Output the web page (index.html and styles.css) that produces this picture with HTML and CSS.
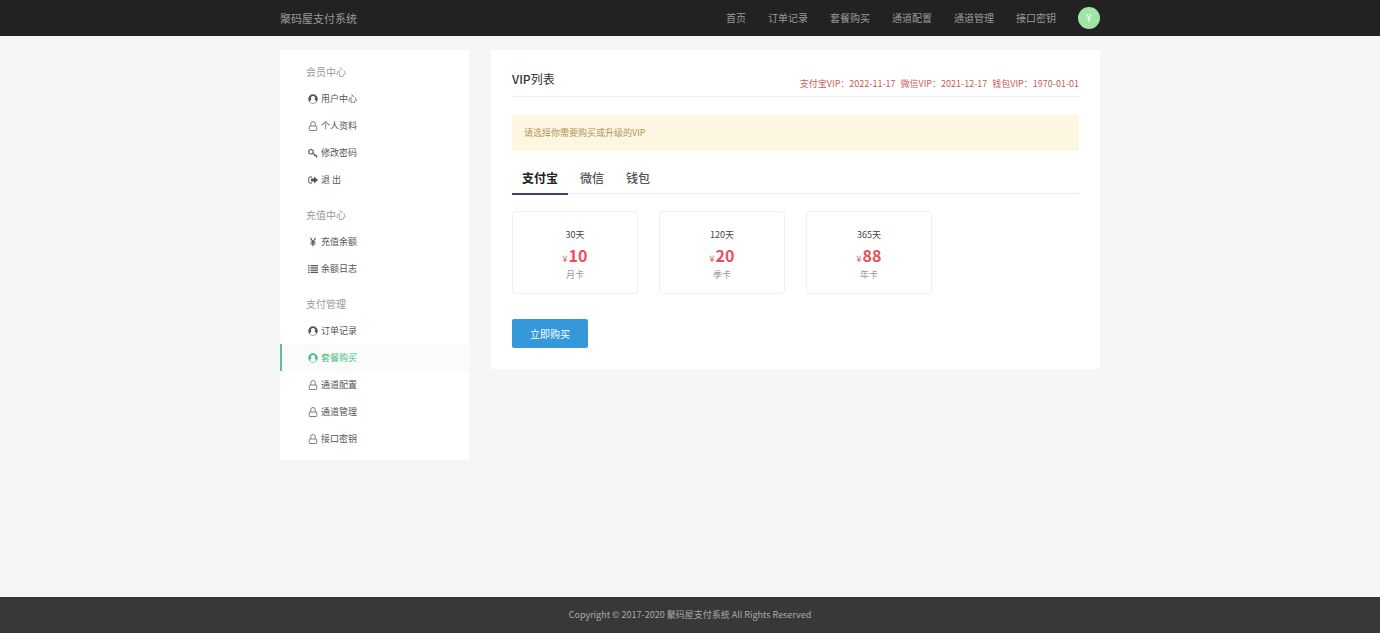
FILE: index.html
```html
<!DOCTYPE html>
<html lang="zh-CN">
<head>
<meta charset="utf-8">
<meta name="viewport" content="width=device-width, initial-scale=1">
<title>聚码屋支付系统</title>
<link rel="stylesheet" href="styles.css">
</head>
<body>
<svg class="sprite" aria-hidden="true">
  <symbol id="i-user" viewBox="0 0 20 20"><path fill-rule="evenodd" d="M10 0.500a9.500 9.500 0 1 1 0 19a9.500 9.500 0 0 1 0-19zM10 4a4.200 4.200 0 0 0-2.600 7.500c-2 .4-3.400 1.700-4 3.500a8 8 0 0 0 13.200 0c-.6-1.800-2-3.100-4-3.500A4.200 4.200 0 0 0 10 4z"/></symbol>
  <symbol id="i-lock" viewBox="0 0 20 20"><path fill="none" stroke="currentColor" stroke-width="1.500" stroke-linejoin="round" d="M4 10h12a1.500 1.500 0 0 1 1.500 1.500v6A1.500 1.500 0 0 1 16 19H4a1.500 1.500 0 0 1-1.500-1.500v-6A1.500 1.500 0 0 1 4 10zM5.500 10V5.500a4.500 4.500 0 0 1 9 0V10"/></symbol>
  <symbol id="i-key" viewBox="0 0 20 20"><path fill="none" stroke="currentColor" stroke-width="2.200" d="M6 3a4.500 4.500 0 1 1 0 9a4.500 4.500 0 0 1 0-9zM9.500 10.500l9 6.500M12.500 16.500l2.500-3M16 19l2.500-3"/></symbol>
  <symbol id="i-exit" viewBox="0 0 20 20"><path fill="none" stroke="currentColor" stroke-width="2" d="M8 4H3.500a2 2 0 0 0-2 2v8a2 2 0 0 0 2 2H8"/><path d="M12 3l8 7l-8 7v-4H6V7h6z"/></symbol>
  <symbol id="i-yen" viewBox="0 0 20 20"><path fill="none" stroke="currentColor" stroke-width="2.400" d="M5 2l5 8l5-8M10 9v9.500M5 10.500h10M5 14h10"/></symbol>
  <symbol id="i-list" viewBox="0 0 20 20"><path d="M0 2h3v2.500H0zM5 2h15v2.500H5zM0 6.500h3V9H0zM5 6.500h15V9H5zM0 11h3v2.500H0zM5 11h15v2.500H5zM0 15.500h3V18H0zM5 15.500h15V18H5z"/></symbol>
</svg>

<header class="topbar">
  <div class="container topbar-inner">
    <a class="brand" href="#">聚码屋支付系统</a>
    <nav class="topnav">
      <a href="#">首页</a>
      <a href="#">订单记录</a>
      <a href="#">套餐购买</a>
      <a href="#">通道配置</a>
      <a href="#">通道管理</a>
      <a href="#">接口密钥</a>
      <a class="avatar" href="#">Y</a>
    </nav>
  </div>
</header>

<div class="container layout">
  <aside class="sidebar">
    <section class="group">
      <h2 class="group-title">会员中心</h2>
      <a class="item" href="#"><svg class="icon"><use href="#i-user"/></svg>用户中心</a>
      <a class="item" href="#"><svg class="icon"><use href="#i-lock"/></svg>个人资料</a>
      <a class="item" href="#"><svg class="icon"><use href="#i-key"/></svg>修改密码</a>
      <a class="item" href="#"><svg class="icon"><use href="#i-exit"/></svg>退 出</a>
    </section>
    <section class="group">
      <h2 class="group-title">充值中心</h2>
      <a class="item" href="#"><svg class="icon"><use href="#i-yen"/></svg>充值余额</a>
      <a class="item" href="#"><svg class="icon"><use href="#i-list"/></svg>余额日志</a>
    </section>
    <section class="group">
      <h2 class="group-title">支付管理</h2>
      <a class="item" href="#"><svg class="icon"><use href="#i-user"/></svg>订单记录</a>
      <a class="item active" href="#"><svg class="icon"><use href="#i-user"/></svg>套餐购买</a>
      <a class="item" href="#"><svg class="icon"><use href="#i-lock"/></svg>通道配置</a>
      <a class="item" href="#"><svg class="icon"><use href="#i-lock"/></svg>通道管理</a>
      <a class="item" href="#"><svg class="icon"><use href="#i-lock"/></svg>接口密钥</a>
    </section>
  </aside>

  <main class="panel">
    <div class="panel-head">
      <h1 class="panel-title"><span class="latin">VIP</span>列表</h1>
      <div class="expiry">
        <span>支付宝VIP：2022-11-17</span>
        <span>微信VIP：2021-12-17</span>
        <span>钱包VIP：1970-01-01</span>
      </div>
    </div>
    <div class="notice">请选择你需要购买或升级的VIP</div>
    <div class="tabs" role="tablist">
      <button class="tab selected" type="button" role="tab" aria-selected="true">支付宝</button>
      <button class="tab" type="button" role="tab" aria-selected="false">微信</button>
      <button class="tab" type="button" role="tab" aria-selected="false">钱包</button>
    </div>
    <div class="plans">
      <button class="plan" type="button"><span class="days">30天</span><span class="price"><small>¥</small>10</span><span class="kind">月卡</span></button>
      <button class="plan" type="button"><span class="days">120天</span><span class="price"><small>¥</small>20</span><span class="kind">季卡</span></button>
      <button class="plan" type="button"><span class="days">365天</span><span class="price"><small>¥</small>88</span><span class="kind">年卡</span></button>
    </div>
    <button class="buy" type="button">立即购买</button>
  </main>
</div>

<footer class="footer">Copyright © 2017-2020 聚码屋支付系统 All Rights Reserved</footer>
</body>
</html>
```
FILE: styles.css
```css
* {
  box-sizing: border-box;
}

body {
  margin: 0;
  min-height: 100vh;
  display: flex;
  flex-direction: column;
  background: #f4f6f8;
  color: #555;
  font-family: "Noto Sans CJK SC", "Noto Sans", sans-serif;
  font-size: 9px;
  line-height: 18px;
}

a {
  color: inherit;
  text-decoration: none;
}

button {
  font: inherit;
  cursor: pointer;
}

.sprite {
  position: absolute;
  width: 0;
  height: 0;
}

.container {
  width: 100%;
  max-width: 820px;
  margin: 0 auto;
}

.topbar {
  background: #222;
  color: #999;
}

.topbar-inner {
  display: flex;
  align-items: center;
  justify-content: space-between;
  height: 36px;
}

.brand {
  font-size: 11px;
}

.topnav {
  display: flex;
  align-items: center;
  gap: 22px;
  font-size: 10px;
}

.avatar {
  width: 22px;
  height: 22px;
  border-radius: 50%;
  background: #9fe5a6;
  color: #fff;
  line-height: 22px;
  text-align: center;
}

.layout {
  flex: 1;
  display: grid;
  grid-template-columns: 189px 1fr;
  gap: 22px;
  align-items: start;
  padding: 14px 0;
}

.sidebar {
  display: flex;
  flex-direction: column;
  gap: 8px;
  padding: 8px 0;
  background: #fff;
}

.group-title {
  margin: 0;
  padding-left: 26px;
  color: #999;
  font-size: 10px;
  font-weight: 400;
  line-height: 27px;
}

.item {
  display: flex;
  align-items: center;
  gap: 3px;
  padding-left: 26px;
  border-left: 2px solid transparent;
  line-height: 27px;
}

.item.active {
  border-left-color: #5fc08f;
  background: #fafbfb;
  color: #4dba80;
}

.icon {
  width: 10px;
  height: 10px;
  fill: currentColor;
}

.panel {
  padding: 19px 21px 21px;
  background: #fff;
}

.panel-head {
  display: flex;
  align-items: flex-end;
  justify-content: space-between;
  padding-bottom: 3px;
  border-bottom: 1px solid #eef0f2;
}

.panel-title {
  margin: 0;
  padding-bottom: 4px;
  color: #333;
  font-size: 12px;
  font-weight: 400;
  line-height: 20px;
}

.latin {
  font-weight: 500;
}

.expiry {
  display: flex;
  gap: 5px;
  color: #cc5a54;
}

.notice {
  margin-top: 18px;
  padding: 9px 12px;
  background: #fdf6e0;
  color: #b3955a;
}

.tabs {
  display: flex;
  gap: 2px;
  margin-top: 14px;
  border-bottom: 1px solid #eceef0;
}

.tab {
  margin-bottom: -2px;
  padding: 4px 10px 6px;
  border: 0;
  border-bottom: 2px solid transparent;
  background: none;
  color: #555;
  font-size: 12px;
  font-weight: 500;
  line-height: 18px;
}

.tab.selected {
  border-bottom-color: #3a4175;
  color: #222;
  font-weight: 700;
}

.plans {
  display: grid;
  grid-template-columns: repeat(4, 1fr);
  gap: 21px;
  margin-top: 17px;
}

.plan {
  display: flex;
  flex-direction: column;
  align-items: center;
  padding: 14px 0 9px;
  border: 1px solid #eef0f2;
  border-radius: 4px;
  background: #fff;
  color: #444;
}

.price {
  color: #e8505b;
  font-size: 16px;
  font-weight: 700;
  line-height: 22px;
}

.price small {
  margin-right: 1px;
  font-size: 9px;
  font-weight: 400;
  line-height: 1;
}

.kind {
  color: #999;
}

.buy {
  margin-top: 25px;
  padding: 0 18px;
  border: 0;
  border-radius: 2px;
  background: #3498db;
  color: #fff;
  font-size: 10px;
  line-height: 29px;
}

.footer {
  background: #383838;
  color: #aaa;
  line-height: 36px;
  text-align: center;
}
```
